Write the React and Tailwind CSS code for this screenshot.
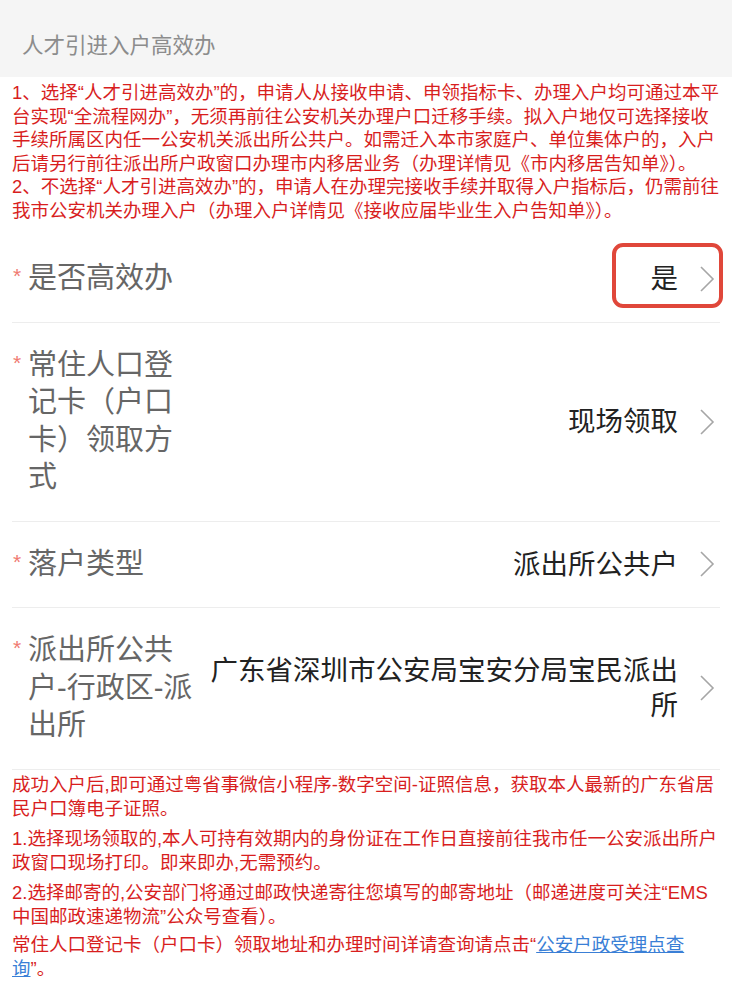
const topNotes = [
  '1、选择“人才引进高效办”的，申请人从接收申请、申领指标卡、办理入户均可通过本平',
  '台实现“全流程网办”，无须再前往公安机关办理户口迁移手续。拟入户地仅可选择接收',
  '手续所属区内任一公安机关派出所公共户。如需迁入本市家庭户、单位集体户的，入户',
  '后请另行前往派出所户政窗口办理市内移居业务（办理详情见《市内移居告知单》）。',
  '2、不选择“人才引进高效办”的，申请人在办理完接收手续并取得入户指标后，仍需前往',
  '我市公安机关办理入户（办理入户详情见《接收应届毕业生入户告知单》）。',
];

const bottomNotes = [
  ['成功入户后,即可通过粤省事微信小程序-数字空间-证照信息，获取本人最新的广东省居', '民户口簿电子证照。'],
  ['1.选择现场领取的,本人可持有效期内的身份证在工作日直接前往我市任一公安派出所户', '政窗口现场打印。即来即办,无需预约。'],
  ['2.选择邮寄的,公安部门将通过邮政快递寄往您填写的邮寄地址（邮递进度可关注“EMS', '中国邮政速递物流”公众号查看）。'],
];

const Chevron = () => (
  <svg width="16" height="26" viewBox="0 0 16 26" className="shrink-0 ml-[21px]">
    <polyline points="2,1 14,13 2,25" fill="none" stroke="#a6a6a6" strokeWidth="1.6" />
  </svg>
);

const FormRow = ({ label, value, highlight = false }) => (
  <div className="relative flex items-center py-6 border-b border-[#ededed]">
    <div className="flex shrink-0">
      <span className="w-4 pt-[5px] pl-[1px] text-[21px] leading-none text-[#f07a72]">*</span>
      <div className="w-[168px] text-[29px] leading-[37.5px] text-[#666]">{label}</div>
    </div>
    <div className="flex-1 pl-3 text-right text-[27.5px] leading-[35px] text-[#222]">{value}</div>
    <Chevron />
    <div className="w-[5px] shrink-0" />
    {highlight && (
      <span className="absolute top-[7px] right-[-3px] w-[111px] h-[65px] border-4 border-[#e0473a] rounded-[11px]" />
    )}
  </div>
);

export default function App() {
  return (
    <div className="w-[732px] min-h-[984px] bg-white font-['Liberation_Sans','Noto_Sans_CJK_SC',sans-serif]">
      <div className="h-[77px] bg-[#f5f5f5] pl-[22px] pt-[33px]">
        <div className="text-[21.5px] leading-[26px] text-[#8c8c8c]">人才引进入户高效办</div>
      </div>

      <div className="px-3 pt-[4px] pb-[14px] text-[18.5px] leading-[23.5px] text-[#d81e1e] whitespace-nowrap">
        {topNotes.map((line, i) => (
          <div key={i}>{line}</div>
        ))}
      </div>

      <div className="mx-3">
        <FormRow label="是否高效办" value="是" highlight />
        <FormRow label="常住人口登记卡（户口卡）领取方式" value="现场领取" />
        <FormRow label="落户类型" value="派出所公共户" />
        <FormRow label="派出所公共户-行政区-派出所" value="广东省深圳市公安局宝安分局宝民派出所" />
      </div>

      <div className="px-3 pt-[3px] pb-4 text-[18.5px] leading-[24px] text-[#d81e1e] whitespace-nowrap">
        {bottomNotes.map((para, i) => (
          <div key={i} className={i > 0 ? 'mt-[6px]' : ''}>
            {para.map((line, j) => (
              <div key={j}>{line}</div>
            ))}
          </div>
        ))}
        <div className="mt-[4px]">
          常住人口登记卡（户口卡）领取地址和办理时间详请查询请点击“<a className="text-[#3a7fd6] underline">公安户政受理点查</a>
          <br />
          <a className="text-[#3a7fd6] underline">询</a>”。
        </div>
      </div>
    </div>
  );
}
